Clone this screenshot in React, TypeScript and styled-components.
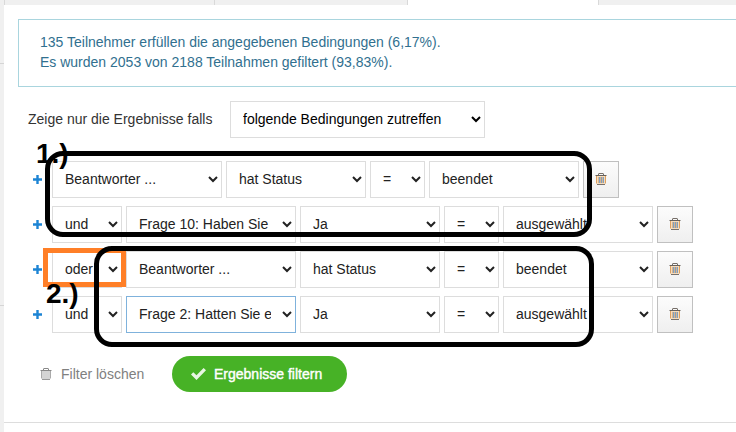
import React from "react";
import styled, { createGlobalStyle } from "styled-components";

const GlobalStyle = createGlobalStyle`
  *, *::before, *::after { box-sizing: border-box; }
  body {
    margin: 0;
    background: #fff;
    color: #333;
    font: 14px/20px "Liberation Sans", Arial, sans-serif;
  }
  button, select { font: inherit; }
`;

const Page = styled.div`
  display: flex;
  min-height: 100vh;
  overflow: hidden;
`;

const Gutter = styled.div`
  flex: 0 0 4px;
  display: flex;
  flex-direction: column;
  background: #f0f0f0;
`;

const GutterCell = styled.div<{ $height: number }>`
  height: ${(p) => p.$height}px;
  border-bottom: 1px solid #d5d5d5;
`;

const Main = styled.main`
  flex: 1;
  min-width: 0;
`;

const TabStrip = styled.div`
  display: flex;
  height: 5px;
  background: #f0f0f0;
`;

const Tab = styled.div<{ $width: number; $active?: boolean }>`
  flex: 0 0 ${(p) => p.$width}px;
  border-right: 1px solid #d9d9d9;
  background: ${(p) => (p.$active ? "#fff" : "#f0f0f0")};
`;

const Panel = styled.section`
  padding: 14px 0 30px 14px;
  border-bottom: 1px solid #ddd;
`;

const Notice = styled.div`
  padding: 12px 20px 14px 21px;
  border: 1px solid #a9d5de;
  border-right: 0;
  color: #31708f;
  font-size: 14px;
  p { margin: 0; }
`;

const MatchLabel = styled.label`
  display: flex;
  align-items: center;
  gap: 8px;
  margin: 14px 0 0 10px;
`;

const MatchText = styled.span`
  min-width: 194px;
  padding-bottom: 2px;
`;

const Select = styled.select<{ $width: number; $focused?: boolean; $dark?: boolean }>`
  flex: 0 0 ${(p) => p.$width}px;
  width: ${(p) => p.$width}px;
  height: 37px;
  padding: 5px 8px 7px 8px;
  border: 1px solid ${(p) => (p.$focused ? "#7fb2dc" : "#ddd")};
  border-radius: 0;
  background-color: #fff;
  color: ${(p) => (p.$dark ? "#000" : "#222")};
`;

const Conditions = styled.div`
  position: relative;
  display: flex;
  flex-direction: column;
  gap: 8px;
  margin: 23px 0 0 15px;
`;

const Row = styled.div`
  display: flex;
  align-items: center;
  gap: 4px;
`;

const AddButton = styled.button`
  display: flex;
  width: 15px;
  padding: 0;
  border: 0;
  background: none;
  color: #1c84d4;
`;

const RemoveButton = styled.button`
  display: flex;
  align-items: center;
  justify-content: center;
  width: 36px;
  height: 37px;
  padding: 0 0 1px;
  border: 1px solid #c0c0c0;
  background: linear-gradient(#fcfcfc, #efefef);
`;

const Actions = styled.div`
  display: flex;
  align-items: center;
  gap: 25px;
  margin: 23px 0 0 22px;
`;

const ClearButton = styled.button`
  display: flex;
  align-items: center;
  gap: 9px;
  min-width: 107px;
  padding: 0;
  border: 0;
  background: none;
  color: #808080;
`;

const SubmitButton = styled.button`
  display: flex;
  align-items: center;
  gap: 8px;
  min-width: 175px;
  height: 36px;
  padding: 0 19px;
  border: 0;
  border-radius: 18px;
  background: #47b226;
  color: #fff;
  -webkit-text-stroke: 0.4px #fff;
`;

const Frame = styled.div<{ $x: number; $y: number; $w: number; $h: number; $orange?: boolean }>`
  position: absolute;
  left: ${(p) => p.$x}px;
  top: ${(p) => p.$y}px;
  width: ${(p) => p.$w}px;
  height: ${(p) => p.$h}px;
  border: 5px solid ${(p) => (p.$orange ? "#ff7f27" : "#000")};
  border-radius: ${(p) => (p.$orange ? 0 : 18)}px;
  pointer-events: none;
`;

const Marker = styled.strong<{ $x: number; $y: number }>`
  position: absolute;
  left: ${(p) => p.$x}px;
  top: ${(p) => p.$y}px;
  color: #000;
  font-size: 28px;
  line-height: 32px;
  pointer-events: none;
`;

const PlusIcon = () => (
  <svg width="9" height="9" viewBox="0 0 9 9" fill="currentColor" aria-hidden="true">
    <path d="M3.3 0h2.4v3.3H9v2.4H5.7V9H3.3V5.7H0V3.3h3.3z" />
  </svg>
);

const TrashIcon = ({ tinted }: { tinted?: boolean }) => (
  <svg width="12" height="12" viewBox="0 0 12 12" fill="none" aria-hidden="true">
    <path d="M2 3h8v8H2z" fill={tinted ? "#f6dcbc" : "#d4d4d4"} />
    <path d="M3.5 2V1q0-.5.5-.5h4q.5 0 .5.5v1" stroke={tinted ? "#77706a" : "#888"} />
    <path d="M.5 2.5h11" stroke={tinted ? "#66605a" : "#888"} />
    <path d="M1.5 3v7.5M10.5 3v7.5" stroke={tinted ? "#dda060" : "#aaa"} />
    <path d="M2 11.5h8" stroke={tinted ? "#77706a" : "#999"} />
    {tinted && <path d="M4.5 4v6M6.5 4v6M8.5 4v6" stroke="#7f9fc0" />}
    {tinted && <path d="M3.5 4v6M5.5 4v6M7.5 4v6" stroke="#d8b48c" />}
  </svg>
);

const CheckIcon = () => (
  <svg width="15" height="12" viewBox="0 0 15 12" fill="#fff" fillOpacity=".88" aria-hidden="true">
    <path d="M0 6.6 2.3 4.3 5.5 7.3 12.6 0 15 2.3 5.5 12z" />
  </svg>
);

type Field = { label: string; value: string; width: number; focused?: boolean };

const link = (value: string): Field => ({ label: "Verknüpfung", value, width: 70 });
const subject = (value: string, focused = false): Field => ({ label: "Frage", value, width: 170, focused });
const property = (value: string): Field => ({ label: "Eigenschaft", value, width: 140 });
const operator: Field = { label: "Operator", value: "=", width: 55 };
const target = (value: string): Field => ({ label: "Wert", value, width: 150 });

const rows: Field[][] = [
  [subject("Beantworter ..."), property("hat Status"), operator, target("beendet")],
  [link("und"), subject("Frage 10: Haben Sie"), property("Ja"), operator, target("ausgewählt")],
  [link("oder"), subject("Beantworter ..."), property("hat Status"), operator, target("beendet")],
  [link("und"), subject("Frage 2: Hatten Sie e", true), property("Ja"), operator, target("ausgewählt")],
];

export default function App() {
  return (
    <>
      <GlobalStyle />
      <Page>
        <Gutter>
          <GutterCell $height={64} />
          <GutterCell $height={242} />
        </Gutter>
        <Main>
          <TabStrip>
            <Tab $width={1} />
            <Tab $width={210} />
            <Tab $width={193} />
            <Tab $width={191} $active />
          </TabStrip>
          <Panel>
            <Notice>
              <p>135 Teilnehmer erfüllen die angegebenen Bedingungen (6,17%).</p>
              <p>Es wurden 2053 von 2188 Teilnahmen gefiltert (93,83%).</p>
            </Notice>
            <MatchLabel>
              <MatchText>Zeige nur die Ergebnisse falls</MatchText>
              <Select $width={255} $dark>
                <option>folgende Bedingungen zutreffen</option>
              </Select>
            </MatchLabel>
            <Conditions>
              {rows.map((fields, i) => (
                <Row key={i}>
                  <AddButton type="button" aria-label="Bedingung hinzufügen">
                    <PlusIcon />
                  </AddButton>
                  {fields.map((f) => (
                    <Select key={f.label} aria-label={f.label} $width={f.width} $focused={f.focused}>
                      <option>{f.value}</option>
                    </Select>
                  ))}
                  <RemoveButton type="button" aria-label="Bedingung entfernen">
                    <TrashIcon tinted />
                  </RemoveButton>
                </Row>
              ))}
              <Frame $x={10} $y={87} $w={83} $h={39} $orange />
              <Frame $x={12} $y={-10} $w={547} $h={86} />
              <Frame $x={61} $y={85} $w={500} $h={101} />
              <Marker $x={3} $y={-23}>1.)</Marker>
              <Marker $x={13} $y={117}>2.)</Marker>
            </Conditions>
            <Actions>
              <ClearButton type="button">
                <TrashIcon />
                Filter löschen
              </ClearButton>
              <SubmitButton type="button">
                <CheckIcon />
                Ergebnisse filtern
              </SubmitButton>
            </Actions>
          </Panel>
        </Main>
      </Page>
    </>
  );
}
